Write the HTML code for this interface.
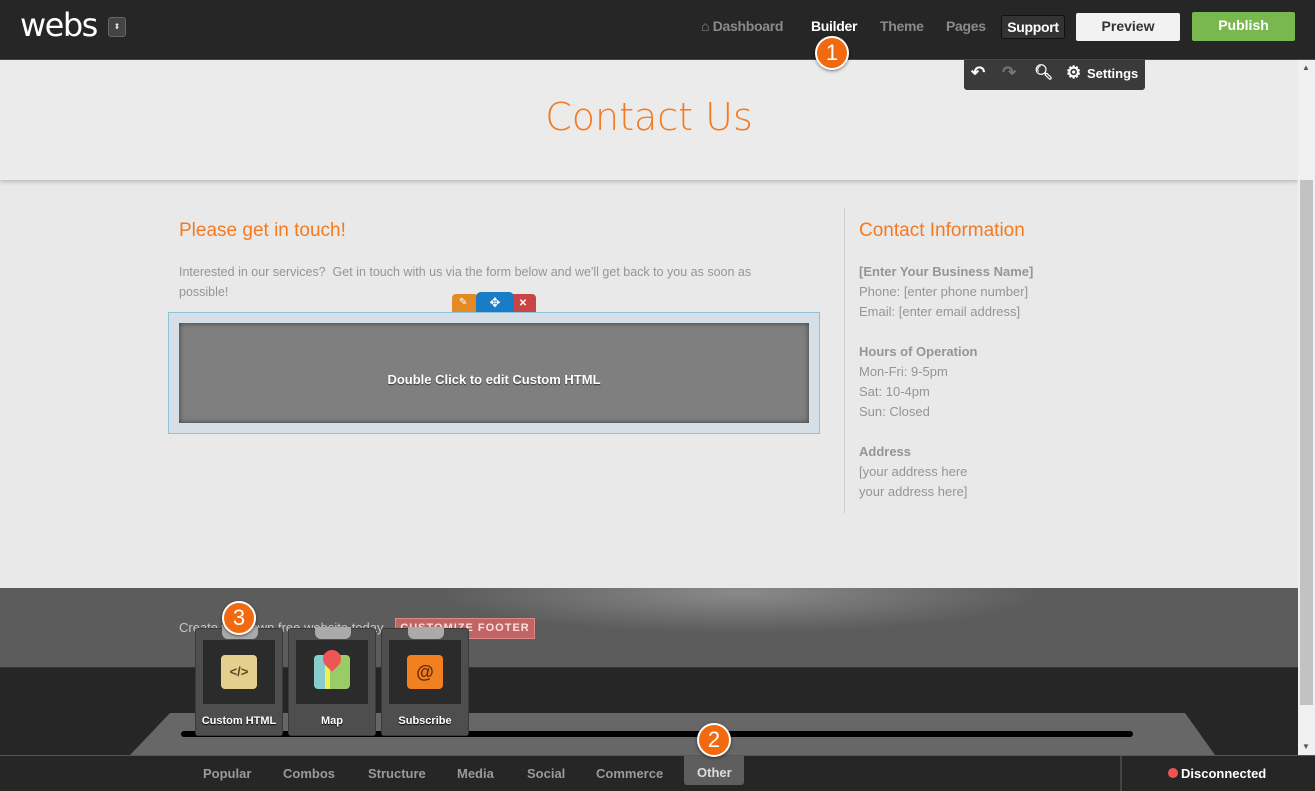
<!DOCTYPE html>
<html><head><meta charset="utf-8"><style>
*{margin:0;padding:0;box-sizing:border-box}
body{width:1315px;height:791px;overflow:hidden;position:relative;font-family:"Liberation Sans",Arial,sans-serif;background:#e9e9e9}
.abs{position:absolute}
#top{left:0;top:0;width:1315px;height:60px;background:#262626;border-bottom:1px solid #4a4a4a}
.nav{top:18px;font-size:14px;font-weight:bold;color:#8a8a8a;letter-spacing:-0.3px}
.badge{width:34px;height:34px;border-radius:50%;background:#f26a10;border:2px solid #fff;color:#fff;font-size:22px;text-align:center;line-height:30px;box-shadow:0 1px 3px rgba(0,0,0,.5);z-index:5}
.card{width:88px;height:108px;background:#4e4e4e;border:1px solid #3a3a3a;border-radius:3px;top:628px}
.card .in{position:absolute;left:7px;top:11px;width:72px;height:64px;background:#2b2b2b}
.card .lb{position:absolute;left:0;width:100%;top:86px;text-align:center;color:#fff;font-size:11px;font-weight:bold;text-shadow:0 1px 1px #000}
.card .tab{position:absolute;left:26px;top:-2px;width:36px;height:12px;background:#aaa;border-radius:0 0 6px 6px}
.tabs{top:766px;font-size:13px;font-weight:bold;color:#9a9a9a}
.ci{font-size:13px;color:#959595;line-height:20px}
</style></head><body>
<div class="abs" id="top"></div>
<div class="abs" style="left:20px;top:6px;font-size:32px;color:#fff;letter-spacing:-1.5px;font-family:'DejaVu Sans',sans-serif">webs</div>
<div class="abs" style="left:108px;top:17px;width:18px;height:20px;background:#444;border:1px solid #666;border-radius:3px;color:#ddd;font-size:8px;text-align:center;line-height:18px">⬍</div>
<div class="abs nav" style="left:701px">⌂ Dashboard</div>
<div class="abs nav" style="left:811px;color:#fff">Builder</div>
<div class="abs nav" style="left:880px">Theme</div>
<div class="abs nav" style="left:946px">Pages</div>
<div class="abs" style="left:1001px;top:15px;width:64px;height:24px;background:#333;border:1px solid #111;border-radius:3px;color:#fff;font-size:14px;font-weight:bold;text-align:center;line-height:22px;letter-spacing:-0.3px">Support</div>
<div class="abs" style="left:1076px;top:13px;width:104px;height:28px;background:#f2f2f2;border-radius:2px;color:#333;font-size:14px;font-weight:bold;text-align:center;line-height:26px">Preview</div>
<div class="abs" style="left:1192px;top:12px;width:103px;height:29px;background:#79b84e;border-radius:2px;color:#fff;font-size:14px;font-weight:bold;text-align:center;line-height:27px">Publish</div>
<!-- header -->
<div class="abs" style="left:0;top:60px;width:1298px;height:120px;background:#ebebeb;box-shadow:0 2px 4px rgba(0,0,0,.2)"></div>
<div class="abs" style="left:964px;top:60px;width:181px;height:30px;background:#3a3a3a;border-radius:0 0 3px 3px;color:#fff;font-size:13px;font-weight:bold">
<span class="abs" style="left:7px;top:3px;font-size:17px">↶</span><span class="abs" style="left:38px;top:3px;font-size:17px;color:#777">↷</span><span class="abs" style="left:70px;top:3px;font-size:15px">🔍︎</span><span class="abs" style="left:102px;top:3px;font-size:17px">⚙</span><span class="abs" style="left:123px;top:6px">Settings</span></div>
<div class="abs badge" style="left:815px;top:36px">1</div>
<div class="abs" style="left:0;top:95px;width:1298px;text-align:center;font-size:38px;color:#f47a20;font-family:'DejaVu Sans',sans-serif;font-weight:300">Contact Us</div>
<!-- content -->
<div class="abs" style="left:179px;top:220px;font-size:19px;color:#f47a20">Please get in touch!</div>
<div class="abs ci" style="left:179px;top:262px;width:600px;font-size:12.5px">Interested in our services?&nbsp; Get in touch with us via the form below and we'll get back to you as soon as possible!</div>
<div class="abs" style="left:452px;top:294px;width:26px;height:19px;background:#e28a24;border-radius:4px 4px 0 0"></div>
<div class="abs" style="left:510px;top:294px;width:26px;height:19px;background:#c94545;border-radius:4px 4px 0 0;color:#fff;font-size:10px;text-align:center;line-height:19px;font-weight:bold">✕</div>
<div class="abs" style="left:476px;top:292px;width:38px;height:21px;background:#1a7cc7;border-radius:5px 5px 0 0;color:#fff;font-size:13px;text-align:center;line-height:21px">✥</div>
<div class="abs" style="left:459px;top:297px;color:#fff;font-size:10px">✎</div>
<div class="abs" style="left:168px;top:312px;width:652px;height:122px;background:#d5dfe5;border:1px solid #8fc1dc"></div>
<div class="abs" style="left:179px;top:323px;width:630px;height:100px;background:#7f7f7f;box-shadow:inset 0 0 6px rgba(0,0,0,.5);color:#fff;font-size:13px;font-weight:bold;text-align:center;line-height:114px;text-shadow:0 1px 1px #333">Double Click to edit Custom HTML</div>
<div class="abs" style="left:844px;top:208px;width:1px;height:305px;background:#ccc"></div>
<div class="abs" style="left:859px;top:220px;font-size:19px;color:#f47a20">Contact Information</div>
<div class="abs ci" style="left:859px;top:262px"><b>[Enter Your Business Name]</b><br>Phone: [enter phone number]<br>Email: [enter email address]<br><br><b>Hours of Operation</b><br>Mon-Fri: 9-5pm<br>Sat: 10-4pm<br>Sun: Closed<br><br><b>Address</b><br>[your address here<br>your address here]</div>
<!-- footer -->
<div class="abs" style="left:0;top:588px;width:1298px;height:80px;background:radial-gradient(ellipse 300px 40px at 740px 5px,#8a8a8a,#5c5c5c 100%);border-bottom:1px solid #333"></div>
<div class="abs" style="left:179px;top:620px;font-size:13px;color:#c8c8c8">Create your own free website today</div>
<div class="abs" style="left:395px;top:618px;width:140px;height:21px;background:#c06464;border:1px solid #d88;color:#fbdede;font-size:11px;font-weight:bold;letter-spacing:1px;text-align:center;line-height:19px">CUSTOMIZE FOOTER</div>
<div class="abs" style="left:0;top:668px;width:1298px;height:87px;background:#262626"></div>
<svg class="abs" style="left:0;top:700px" width="1298" height="56"><polygon points="170,13 1185,13 1215,55 130,55" fill="#676767"/><rect x="181" y="31" width="952" height="6" rx="3" fill="#000"/></svg>
<div class="abs card" style="left:195px"><div class="tab"></div><div class="in"><div class="abs" style="left:18px;top:15px;width:36px;height:34px;background:#e6cf8e;border-radius:4px;color:#5a4520;font-size:13px;font-weight:bold;text-align:center;line-height:34px">&lt;/&gt;</div></div><div class="lb">Custom HTML</div></div>
<div class="abs card" style="left:288px"><div class="tab"></div><div class="in"><div class="abs" style="left:18px;top:15px;width:36px;height:34px;background:linear-gradient(90deg,#8cc 0,#8cc 30%,#ee5 30%,#ee5 45%,#9c6 45%);border-radius:4px"></div><div class="abs" style="left:27px;top:10px;width:18px;height:18px;background:#e55;border-radius:50% 50% 50% 0;transform:rotate(-45deg)"></div></div><div class="lb">Map</div></div>
<div class="abs card" style="left:381px"><div class="tab"></div><div class="in"><div class="abs" style="left:18px;top:15px;width:36px;height:34px;background:#f08020;border-radius:4px;color:#6a2a00;font-size:18px;font-weight:bold;text-align:center;line-height:34px">@</div></div><div class="lb">Subscribe</div></div>
<div class="abs badge" style="left:222px;top:601px">3</div>
<!-- bottom bar -->
<div class="abs" style="left:0;top:755px;width:1315px;height:36px;background:#262626;border-top:1px solid #555"></div>
<div class="abs" style="left:1120px;top:756px;width:2px;height:35px;background:#444"></div>
<div class="abs" style="left:684px;top:756px;width:60px;height:29px;background:#5e5e5e;border-radius:0 0 3px 3px"></div>
<div class="abs tabs" style="left:203px">Popular</div>
<div class="abs tabs" style="left:283px">Combos</div>
<div class="abs tabs" style="left:368px">Structure</div>
<div class="abs tabs" style="left:457px">Media</div>
<div class="abs tabs" style="left:527px">Social</div>
<div class="abs tabs" style="left:596px">Commerce</div>
<div class="abs tabs" style="left:697px;top:765px;color:#ddd">Other</div>
<div class="abs badge" style="left:697px;top:723px">2</div>
<div class="abs" style="left:1168px;top:766px;font-size:13px;font-weight:bold;color:#fff"><span style="display:inline-block;width:10px;height:10px;border-radius:50%;background:#e55;margin-right:3px"></span>Disconnected</div>
<!-- scrollbar -->
<div class="abs" style="left:1298px;top:60px;width:17px;height:695px;background:#f0f0f0"></div>
<div class="abs" style="left:1300px;top:180px;width:13px;height:525px;background:#c2c2c2"></div>
<div class="abs" style="left:1302px;top:63px;font-size:8px;color:#555">▲</div>
<div class="abs" style="left:1302px;top:742px;font-size:8px;color:#555">▼</div>
</body></html>
